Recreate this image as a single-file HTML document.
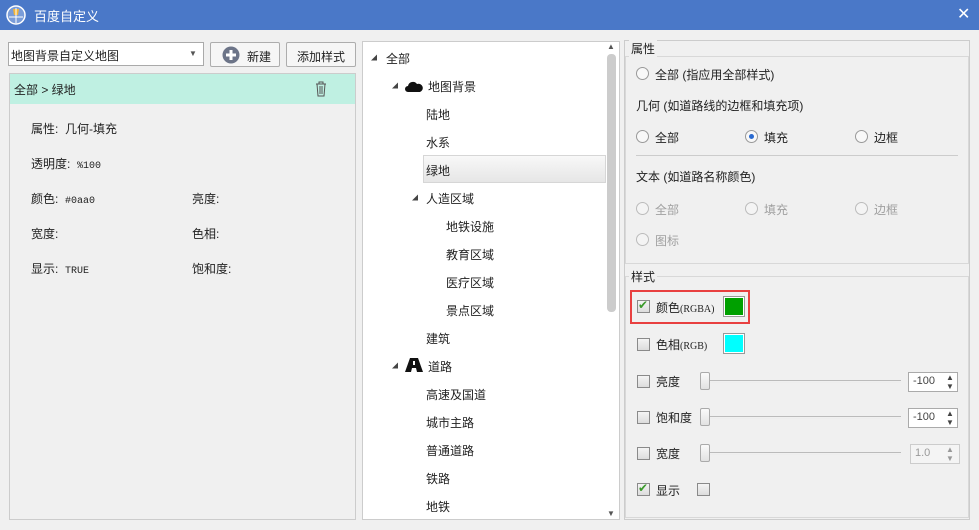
<!DOCTYPE html>
<html><head><meta charset="utf-8"><style>
*{box-sizing:border-box;margin:0;padding:0}
body{width:979px;height:530px;background:#f0f0f0;font-family:"Liberation Sans","Noto Sans CJK SC",sans-serif;font-size:12px;color:#222;position:relative;overflow:hidden}
.a{position:absolute;white-space:nowrap}
.title{left:0;top:0;width:979px;height:30px;background:#4a78c8;color:#fff;font-size:13px}
.cb{width:13px;height:13px;border:1px solid #8a8a8a;background:linear-gradient(#f4f4f4,#dcdcdc)}
.rb{width:13px;height:13px;border:1px solid #999;border-radius:50%;background:#f8f8f8}
.gray{color:#a0a0a0}
.spin{width:50px;height:20px;border:1px solid #aaa;background:#fff;font-size:11px;padding:2px 4px;color:#444}
.track{height:3px;border-top:1px solid #bbb;border-bottom:1px solid #eee}
.thumb{width:10px;height:18px;border:1px solid #aaa;background:linear-gradient(#fafafa,#e2e2e2);border-radius:2px}
.tri{font-size:6px;color:#444}
</style></head><body>
<div class="a title"><svg class="a" style="left:6px;top:5px" width="20" height="20"><circle cx="10" cy="10" r="9" fill="#7a9cd8" stroke="#fff" stroke-width="1.5"/><path d="M7 4h6l-1 6h-4z" fill="#f2b43a"/><path d="M3 12h14M10 3v15" stroke="#fff"/></svg><span class="a" style="left:34px;top:6px">百度自定义</span><span class="a" style="left:957px;top:4px;font-size:16px">✕</span></div>

<div class="a" style="left:8px;top:42px;width:196px;height:24px;border:1px solid #aaa;background:#fff;padding:4px 2px;font-size:12px">地图背景自定义地图<span class="a" style="left:180px;top:6px;font-size:8px;color:#555">▼</span></div>
<div class="a" style="left:210px;top:42px;width:70px;height:25px;border:1px solid #adadad;background:#f6f6f6;border-radius:2px"><svg class="a" style="left:11px;top:3px" width="18" height="18"><circle cx="9" cy="9" r="8.5" fill="#6c7488"/><path d="M9 4v10M4 9h10" stroke="#fff" stroke-width="3"/></svg><span class="a" style="left:36px;top:5px;font-size:12px">新建</span></div>
<div class="a" style="left:286px;top:42px;width:70px;height:25px;border:1px solid #adadad;background:#f6f6f6;border-radius:2px;font-size:12px;text-align:center;padding-top:5px">添加样式</div>

<div class="a" style="left:9px;top:73px;width:347px;height:447px;border:1px solid #ccc;background:#f0f0f0"></div>
<div class="a" style="left:10px;top:74px;width:345px;height:30px;background:#bff0e2;font-size:12px;padding:7px 4px">全部 &gt; 绿地
<svg class="a" style="left:305px;top:7px" width="12" height="16"><path d="M1 3h10M4 3V1h4v2M2 3l1 12h6l1-12M5 5v8M7 5v8" stroke="#555" fill="none"/></svg></div>
<div class="a" style="left:31px;top:120px">属性:&nbsp; 几何-填充</div>
<div class="a" style="left:31px;top:155px">透明度:&nbsp; <span style="font-family:'Liberation Mono';font-size:10px">%100</span></div>
<div class="a" style="left:31px;top:190px">颜色:&nbsp; <span style="font-family:'Liberation Mono';font-size:10px">#0aa0</span></div>
<div class="a" style="left:192px;top:190px">亮度:</div>
<div class="a" style="left:31px;top:225px">宽度:</div>
<div class="a" style="left:192px;top:225px">色相:</div>
<div class="a" style="left:31px;top:260px">显示:&nbsp; <span style="font-family:'Liberation Mono';font-size:10px">TRUE</span></div>
<div class="a" style="left:192px;top:260px">饱和度:</div>

<div class="a" style="left:362px;top:41px;width:258px;height:479px;border:1px solid #ccc;background:#fff"></div>
<div class="a" style="left:607px;top:54px;width:9px;height:258px;background:#ccc;border-radius:4px"></div>
<div class="a" style="left:607px;top:42px;font-size:8px;color:#555">▲</div>
<div class="a" style="left:607px;top:509px;font-size:8px;color:#555">▼</div>
<div class="a" style="left:423px;top:155px;width:183px;height:28px;background:linear-gradient(#f8f8f8,#e6e6e6);border:1px solid #d6d6d6"></div>
<div class="a tri" style="left:371px;top:53px">◢</div><div class="a" style="left:386px;top:50px">全部</div>
<div class="a tri" style="left:392px;top:81px">◢</div><svg class="a" style="left:405px;top:80px" width="18" height="12"><path d="M3 12a3 3 0 0 1 0-6a5 5 0 0 1 9-2a4 4 0 0 1 3 8z" fill="#111"/></svg><div class="a" style="left:428px;top:78px">地图背景</div>
<div class="a" style="left:426px;top:106px">陆地</div>
<div class="a" style="left:426px;top:134px">水系</div>
<div class="a" style="left:426px;top:162px">绿地</div>
<div class="a tri" style="left:412px;top:193px">◢</div><div class="a" style="left:426px;top:190px">人造区域</div>
<div class="a" style="left:446px;top:218px">地铁设施</div>
<div class="a" style="left:446px;top:246px">教育区域</div>
<div class="a" style="left:446px;top:274px">医疗区域</div>
<div class="a" style="left:446px;top:302px">景点区域</div>
<div class="a" style="left:426px;top:330px">建筑</div>
<div class="a tri" style="left:392px;top:361px">◢</div><svg class="a" style="left:405px;top:358px" width="18" height="14"><path d="M5 0h8l5 14h-6l-1-4h-4l-1 4h-6z" fill="#111"/><path d="M8 3h2v4h-2z" fill="#fff"/></svg><div class="a" style="left:428px;top:358px">道路</div>
<div class="a" style="left:426px;top:386px">高速及国道</div>
<div class="a" style="left:426px;top:414px">城市主路</div>
<div class="a" style="left:426px;top:442px">普通道路</div>
<div class="a" style="left:426px;top:470px">铁路</div>
<div class="a" style="left:426px;top:498px">地铁</div>

<div class="a" style="left:624px;top:40px;width:346px;height:480px;border:1px solid #ccc"></div>
<div class="a" style="left:625px;top:56px;width:344px;height:208px;border:1px solid #d8d8d8"></div>
<div class="a" style="left:629px;top:40px;background:#f0f0f0;padding:0 2px">属性</div>
<div class="a rb" style="left:636px;top:67px"></div><div class="a" style="left:655px;top:66px">全部 (指应用全部样式)</div>
<div class="a" style="left:636px;top:97px">几何 (如道路线的边框和填充项)</div>
<div class="a rb" style="left:636px;top:130px"></div><div class="a" style="left:655px;top:129px">全部</div>
<div class="a rb" style="left:745px;top:130px"><div class="a" style="left:3px;top:3px;width:5px;height:5px;border-radius:50%;background:#2a6ad0"></div></div><div class="a" style="left:764px;top:129px">填充</div>
<div class="a rb" style="left:855px;top:130px"></div><div class="a" style="left:874px;top:129px">边框</div>
<div class="a" style="left:636px;top:155px;width:322px;border-top:1px solid #ccc"></div>
<div class="a" style="left:636px;top:168px">文本 (如道路名称颜色)</div>
<div class="a rb" style="left:636px;top:202px;opacity:.6"></div><div class="a gray" style="left:655px;top:201px">全部</div>
<div class="a rb" style="left:745px;top:202px;opacity:.6"></div><div class="a gray" style="left:764px;top:201px">填充</div>
<div class="a rb" style="left:855px;top:202px;opacity:.6"></div><div class="a gray" style="left:874px;top:201px">边框</div>
<div class="a rb" style="left:636px;top:233px;opacity:.6"></div><div class="a gray" style="left:655px;top:232px">图标</div>

<div class="a" style="left:625px;top:276px;width:344px;height:242px;border:1px solid #d8d8d8"></div>
<div class="a" style="left:629px;top:268px;background:#f0f0f0;padding:0 2px">样式</div>
<div class="a" style="left:630px;top:290px;width:120px;height:34px;border:2px solid #e84040"></div>
<div class="a cb" style="left:637px;top:300px"><span class="a" style="left:0;top:-3px;color:#3a9a2a;font-size:12px">✔</span></div><div class="a" style="left:656px;top:299px">颜色<span style="font-family:'Liberation Serif';font-size:10px">(RGBA)</span></div>
<div class="a" style="left:723px;top:296px;width:22px;height:21px;border:1px solid #999;padding:1px;background:#fff"><div style="width:100%;height:100%;background:#00a000"></div></div>
<div class="a cb" style="left:637px;top:338px"></div><div class="a" style="left:656px;top:336px">色相<span style="font-family:'Liberation Serif';font-size:10px">(RGB)</span></div>
<div class="a" style="left:723px;top:333px;width:22px;height:21px;border:1px solid #999;padding:1px;background:#fff"><div style="width:100%;height:100%;background:#00ffff"></div></div>
<div class="a cb" style="left:637px;top:375px"></div><div class="a" style="left:656px;top:373px">亮度</div>
<div class="a track" style="left:703px;top:380px;width:198px"></div><div class="a thumb" style="left:700px;top:372px"></div>
<div class="a spin" style="left:908px;top:372px">-100<span class="a" style="left:37px;top:0;font-size:8px;line-height:9px">▲<br>▼</span></div>
<div class="a cb" style="left:637px;top:411px"></div><div class="a" style="left:656px;top:409px">饱和度</div>
<div class="a track" style="left:703px;top:416px;width:198px"></div><div class="a thumb" style="left:700px;top:408px"></div>
<div class="a spin" style="left:908px;top:408px">-100<span class="a" style="left:37px;top:0;font-size:8px;line-height:9px">▲<br>▼</span></div>
<div class="a cb" style="left:637px;top:447px"></div><div class="a" style="left:656px;top:445px">宽度</div>
<div class="a track" style="left:703px;top:452px;width:198px"></div><div class="a thumb" style="left:700px;top:444px"></div>
<div class="a spin" style="left:910px;top:444px;color:#999;border-color:#ccc;background:#f4f4f4">1.0<span class="a" style="left:35px;top:0;font-size:8px;line-height:9px">▲<br>▼</span></div>
<div class="a cb" style="left:637px;top:483px"><span class="a" style="left:0;top:-3px;color:#3a9a2a;font-size:12px">✔</span></div><div class="a" style="left:656px;top:482px">显示</div>
<div class="a cb" style="left:697px;top:483px"></div>
</body></html>
